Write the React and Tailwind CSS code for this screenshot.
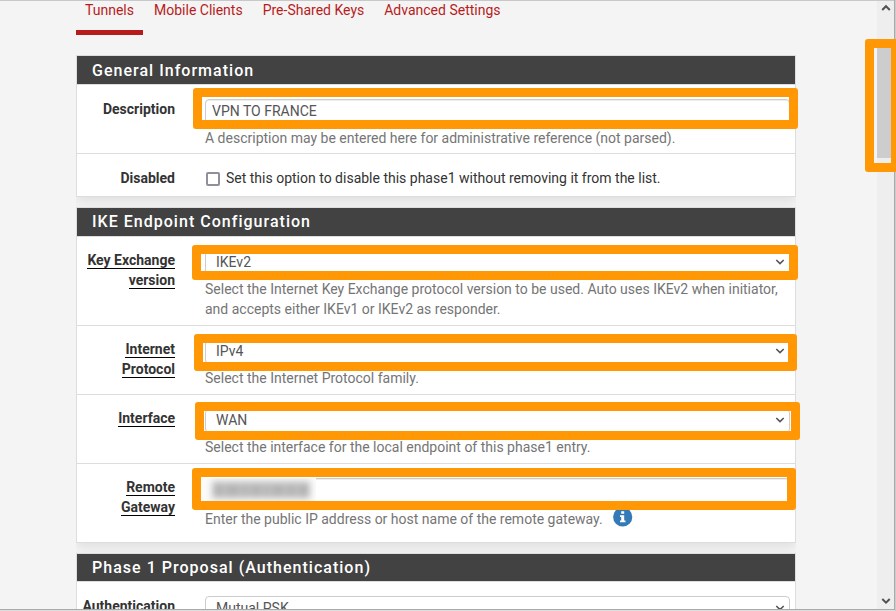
const Chevron = ({ up = false, className = "", stroke = "#555", width = 1.6 }) => (
  <svg viewBox="0 0 10 8" className={`h-2 w-[10px] shrink-0 ${className}`} fill="none" stroke={stroke} strokeWidth={width}>
    <path d={up ? "M1.2 6 5 2.2 8.8 6" : "M1.3 2 5 5.6 8.7 2"} />
  </svg>
);

const Mark = ({ className }) => (
  <div className={`pointer-events-none absolute rounded-[3px] border-[9px] border-[#ff9804] ${className}`} />
);

function Panel({ title, className = "", headClass = "h-7", children }) {
  return (
    <section className={`shrink-0 border border-[#ddd] bg-white shadow-[0_5px_10px_rgba(0,0,0,0.08)] ${className}`}>
      <h2 className={`flex items-center bg-[#424242] pl-[15px] text-[16px] font-medium tracking-[1.02px] text-white ${headClass}`}>
        {title}
      </h2>
      {children}
    </section>
  );
}

function Row({ label, underline = true, className, children }) {
  return (
    <div className={`flex border-t border-[#ddd] ${className}`}>
      <div className="w-[98px] shrink-0 text-right font-bold leading-5 text-[#333]">
        {label.map((line) => (
          <div key={line} className="flex h-5 justify-end">
            <span className={underline ? "h-[19px] whitespace-nowrap border-b border-black" : ""}>{line}</span>
          </div>
        ))}
      </div>
      <div className="ml-[30px] w-[585px] shrink-0">{children}</div>
    </div>
  );
}

const Select = ({ value, className = "mt-px h-6 pb-[2px]" }) => (
  <div className={`flex items-center justify-between rounded border border-[#ccc] pl-[10px] pr-[4px] text-[#555] ${className}`}>
    <span>{value}</span>
    <Chevron />
  </div>
);

const Help = ({ children, className = "mt-1" }) => (
  <p className={`whitespace-nowrap leading-5 text-[#757575] ${className}`}>{children}</p>
);

export default function App() {
  return (
    <div className="relative flex h-[611px] w-[896px] overflow-hidden bg-[#f4f4f4] font-[Roboto,sans-serif] text-[14px] leading-5 text-[#333]">
      <main className="flex h-[609px] w-[877px] flex-col overflow-hidden border-t border-[#c8c8c8] pl-[76px]">
        <nav className="flex h-[34px] shrink-0 text-[#b71c1c]">
          <a className="w-[67px] border-b-[5px] border-[#b71c1c] pl-[9px]"><span className="-mt-px block">Tunnels</span></a>
          <a className="-mt-px ml-[11px]">Mobile Clients</a>
          <a className="-mt-px ml-5">Pre-Shared Keys</a>
          <a className="-mt-px ml-5">Advanced Settings</a>
        </nav>
        <div className="mt-5 flex h-[700px] w-[720px] shrink-0 flex-col overflow-hidden">
          <Panel title="General Information" className="h-[142px]" headClass="h-7 pt-[2px]">
            <Row label={["Description"]} underline={false} className="h-[69px] pt-[14px]">
              <div className="flex h-[25px] items-center rounded border border-[#ccc] pb-px pl-[6px] text-[#555] shadow-[inset_0_1px_1px_rgba(0,0,0,0.075)]">VPN TO FRANCE</div>
              <Help>A description may be entered here for administrative reference (not parsed).</Help>
            </Row>
            <Row label={["Disabled"]} underline={false} className="h-[43px] pt-[14px]">
              <div className="flex items-center whitespace-nowrap pl-px">
                <span className="mr-[6px] mt-[2px] h-[14px] w-[14px] rounded-[2px] border-2 border-[#8f8f9d] bg-white" />
                Set this option to disable this phase1 without removing it from the list.
              </div>
            </Row>
          </Panel>
          <Panel title="IKE Endpoint Configuration" className="mt-[10px] h-[336px]">
            <Row label={["Key Exchange", "version"]} className="h-[89px] pt-[13px]">
              <Select value="IKEv2" />
              <Help>Select the Internet Key Exchange protocol version to be used. Auto uses IKEv2 when initiator,<br />and accepts either IKEv1 or IKEv2 as responder.</Help>
            </Row>
            <Row label={["Internet", "Protocol"]} className="h-[69px] pt-[13px]">
              <Select value="IPv4" />
              <Help>Select the Internet Protocol family.</Help>
            </Row>
            <Row label={["Interface"]} className="h-[69px] pt-[13px]">
              <Select value="WAN" />
              <Help>Select the interface for the local endpoint of this phase1 entry.</Help>
            </Row>
            <Row label={["Remote", "Gateway"]} className="h-[79px] pt-[13px]">
              <div className="mt-px flex h-[25px] rounded border border-[#ccc] shadow-[inset_0_1px_1px_rgba(0,0,0,0.075)]">
                <div className="-ml-[5px] -mt-px flex h-[23px] w-[115px] items-center overflow-hidden bg-[#fbfbfb] pl-[11px]">
                  <div className="flex h-[18px] w-[98px] items-center justify-around bg-[#c6c6c6] blur-[3px]">
                    {[9, 13, 6, 10, 5, 12, 8, 11].map((w, i) => (
                      <span key={i} className="h-[10px] bg-[#b2b2b2]" style={{ width: w }} />
                    ))}
                  </div>
                </div>
              </div>
              <div className="flex">
                <Help className="mt-[6px]">Enter the public IP address or host name of the remote gateway.</Help>
                <svg viewBox="0 0 20 20" className="ml-[10px] mt-[4px] h-5 w-5">
                  <circle cx="9.7" cy="10" r="9.6" fill="#337ab7" />
                  <path d="M8.2 4.3h3v2.5h-3zM7 8.2h4.2v5.2h1.3v1.8H7v-1.8h1.2V10H7z" fill="#fff" />
                </svg>
              </div>
            </Row>
          </Panel>
          <Panel title="Phase 1 Proposal (Authentication)" className="mt-[10px] h-[140px]" headClass="h-[27px]">
            <Row label={["Authentication"]} className="h-[89px] pt-[14px]">
              <Select value="Mutual PSK" className="h-[25px] pb-px" />
            </Row>
          </Panel>
        </div>
      </main>
      <aside className="flex h-[609px] w-[17px] flex-col items-center border-t border-[#c8c8c8] bg-[#eee]">
        <Chevron up className="mt-[3px]" stroke="#505050" width={2} />
        <div className="mt-9 h-[110px] w-full bg-[#cdcdcd]" />
        <Chevron className="mb-1 mt-auto" stroke="#505050" width={2} />
      </aside>
      <div className="h-[610px] w-px bg-[#aaa]" />
      <div className="h-[611px] w-px bg-[#ccc]" />
      <div className="absolute left-0 top-[609px] h-[2px] w-[895px] border-t border-[#aaa] bg-[#ddd]" />
      <Mark className="left-[193px] top-[88px] h-[41px] w-[605px]" />
      <Mark className="left-[192px] top-[245px] h-[35px] w-[606px]" />
      <Mark className="left-[194px] top-[334px] h-[37px] w-[603px]" />
      <Mark className="left-[195px] top-[402px] h-[38px] w-[605px]" />
      <Mark className="left-[192px] top-[468px] h-[42px] w-[604px]" />
      <Mark className="left-[865px] top-[39px] h-[133px] w-[35px]" />
    </div>
  );
}
